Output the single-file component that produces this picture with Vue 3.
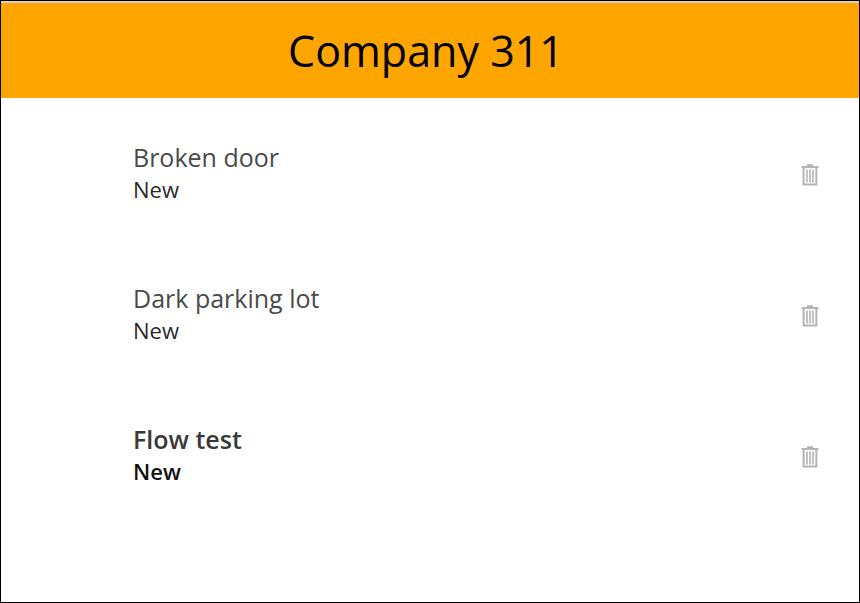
<script setup>
import { ref } from 'vue'

const items = ref([
  { id: 1, title: 'Broken door', status: 'New', current: false },
  { id: 2, title: 'Dark parking lot', status: 'New', current: false },
  { id: 3, title: 'Flow test', status: 'New', current: true },
])

function remove(id) {
  items.value = items.value.filter((item) => item.id !== id)
}
</script>

<template>
  <div class="screen">
    <header class="bar">
      <h1>Company 311</h1>
    </header>
    <ul class="list">
      <li v-for="item in items" :key="item.id" class="row" :class="{ current: item.current }">
        <div class="text">
          <h2>{{ item.title }}</h2>
          <p>{{ item.status }}</p>
        </div>
        <button type="button" class="trash" aria-label="Delete" @click="remove(item.id)">
          <svg width="18" height="22" viewBox="0 0 18 22" fill="none" stroke="currentColor">
            <path d="M6 1.2H12" stroke-width="2" />
            <path d="M0.5 3H17.5" stroke-width="2" />
            <path d="M2.6 3V20.6H15.4V3" stroke-width="2" />
            <path d="M6 5.5V18.5M9 5.5V18.5M12 5.5V18.5" stroke-width="1.6" />
          </svg>
        </button>
      </li>
    </ul>
  </div>
</template>

<style>
body {
  background: #fff;
}
</style>

<style scoped>
.screen {
  box-sizing: border-box;
  min-height: 100vh;
  border: 1px solid #000;
  font-family: "Open Sans", sans-serif;
  color: #000;
}
.bar {
  display: flex;
  align-items: center;
  justify-content: center;
  padding: 18px 8px 17px 0;
  border-top: 2px solid #dccdc6;
  background: #ffa500;
}
h1,
h2,
p,
ul {
  margin: 0;
  padding: 0;
}
h1 {
  font-size: 43px;
  line-height: 60px;
  font-weight: 400;
}
.list {
  list-style: none;
  padding: 42px 40px 0 132px;
}
.row {
  display: flex;
  align-items: flex-start;
  justify-content: space-between;
  height: 141px;
}
h2 {
  font-size: 25px;
  line-height: 34px;
  font-weight: 400;
  color: #4a4a4a;
}
p {
  font-size: 22px;
  line-height: 30px;
  color: #2a2a2a;
}
.current h2 {
  font-weight: 600;
  color: #3a3a3a;
}
.current p {
  font-weight: 600;
  color: #111;
}
.trash {
  display: flex;
  margin-top: 24px;
  padding: 0;
  border: 0;
  background: none;
  color: #b4b4b4;
  cursor: pointer;
}
</style>
